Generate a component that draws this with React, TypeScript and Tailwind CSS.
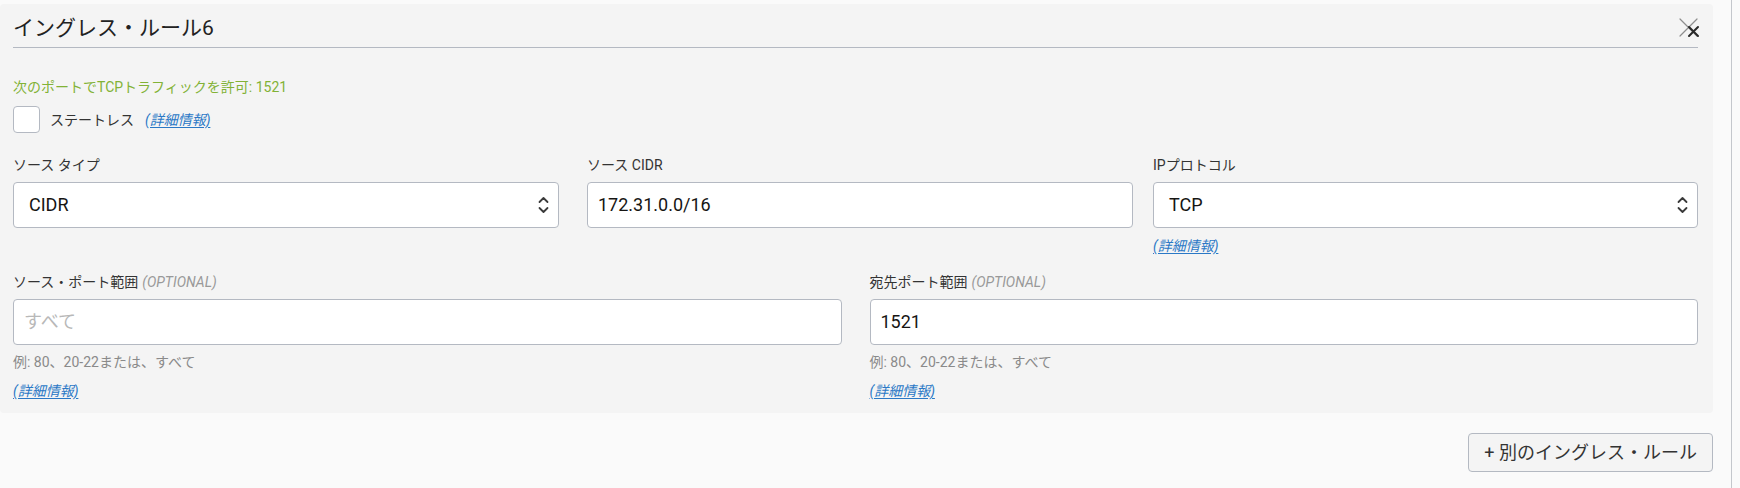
import React from 'react';

const font = { fontFamily: 'Roboto, "Noto Sans CJK JP", sans-serif' };

const MoreInfo = () => (
  <a href="#" className="inline-block italic text-[14px] leading-[20px] text-[#2a78c6] underline underline-offset-2">
    (詳細情報)
  </a>
);

const Chevrons = () => (
  <svg width="11" height="20" viewBox="0 0 11 20" fill="none" stroke="#3a3a3a" strokeWidth="1.8" strokeLinecap="round" strokeLinejoin="round">
    <path d="M1.5 7 L5.5 3 L9.5 7" />
    <path d="M1.5 13 L5.5 17 L9.5 13" />
  </svg>
);

const CloseIcon = () => (
  <svg width="22" height="22" viewBox="0 0 22 22" fill="none" strokeLinecap="round">
    <path d="M2 2 L19 19 M19 2 L2 19" stroke="#8e8e8e" strokeWidth="1.2" />
    <path d="M11 10 L20 19 M20 10 L11 19" stroke="#2a2a2a" strokeWidth="2" />
  </svg>
);

const Label = ({ text, optional }: { text: string; optional?: boolean }) => (
  <div className="text-[14px] leading-[20px] text-[#333]">
    {text}
    {optional && <span className="italic text-[#999] ml-[4px]">(OPTIONAL)</span>}
  </div>
);

const SelectBox = ({ value }: { value: string }) => (
  <div className="mt-[7px] h-[46px] bg-white border border-[#b4b9c2] rounded-[4px] flex items-center justify-between pl-[15px] pr-[9px]">
    <span className="text-[18px] text-[#161513]">{value}</span>
    <Chevrons />
  </div>
);

const TextBox = ({ value, placeholder }: { value?: string; placeholder?: string }) => (
  <div className="mt-[7px] h-[46px] bg-white border border-[#b4b9c2] rounded-[4px] flex items-center px-[10px]">
    {value ? (
      <span className="text-[18px] text-[#161513]">{value}</span>
    ) : (
      <span className="text-[18px] text-[#b8b8b8]">{placeholder}</span>
    )}
  </div>
);

const App = () => {
  return (
    <div className="w-[1740px] h-[488px] bg-[#fafafa] overflow-hidden leading-[20px]" style={font}>
      <div className="w-[1732px] h-full border-r border-[#c4c7cc] pt-[4px]">
        <div className="w-[1713px] bg-[#f4f4f4] rounded-[4px] pl-[13px] pr-[15px] pb-[12px]">
          <div className="flex items-center justify-between pt-[11px] pb-[6px] border-b border-[#b4b9c2]">
            <h2 className="text-[21px] leading-[26px] text-[#222]">イングレス・ルール6</h2>
            <div className="mr-[-2px]">
              <CloseIcon />
            </div>
          </div>

          <p className="mt-[29px] text-[14px] leading-[20px] text-[#82b236]">次のポートでTCPトラフィックを許可: 1521</p>

          <div className="mt-[9px] flex items-center">
            <div className="w-[27px] h-[27px] bg-white border border-[#b4b9c2] rounded-[4px]" />
            <span className="ml-[10px] text-[14px] leading-[20px] text-[#333]">ステートレス</span>
            <span className="ml-[11px] flex">
              <MoreInfo />
            </span>
          </div>

          <div className="mt-[22px] flex items-start">
            <div className="w-[546px]">
              <Label text="ソース タイプ" />
              <SelectBox value="CIDR" />
            </div>
            <div className="w-[546px] ml-[28px]">
              <Label text="ソース CIDR" />
              <TextBox value="172.31.0.0/16" />
            </div>
            <div className="flex-1 ml-[20px]">
              <Label text="IPプロトコル" />
              <SelectBox value="TCP" />
              <div className="mt-[8px] flex">
                <MoreInfo />
              </div>
            </div>
          </div>

          <div className="mt-[16px] flex gap-[28px]">
            <div className="flex-1">
              <Label text="ソース・ポート範囲" optional />
              <TextBox placeholder="すべて" />
              <p className="mt-[7px] text-[14px] leading-[20px] text-[#8a8a8a]">例: 80、20-22または、すべて</p>
              <div className="mt-[9px] flex">
                <MoreInfo />
              </div>
            </div>
            <div className="flex-1">
              <Label text="宛先ポート範囲" optional />
              <TextBox value="1521" />
              <p className="mt-[7px] text-[14px] leading-[20px] text-[#8a8a8a]">例: 80、20-22または、すべて</p>
              <div className="mt-[9px] flex">
                <MoreInfo />
              </div>
            </div>
          </div>
        </div>

        <div className="w-[1713px] flex justify-end mt-[20px]">
          <button className="h-[39px] px-[15px] bg-[#f4f4f4] border border-[#b4b9c2] rounded-[4px] text-[18px] text-[#333]">
            + 別のイングレス・ルール
          </button>
        </div>
      </div>
    </div>
  );
};

export default App;
